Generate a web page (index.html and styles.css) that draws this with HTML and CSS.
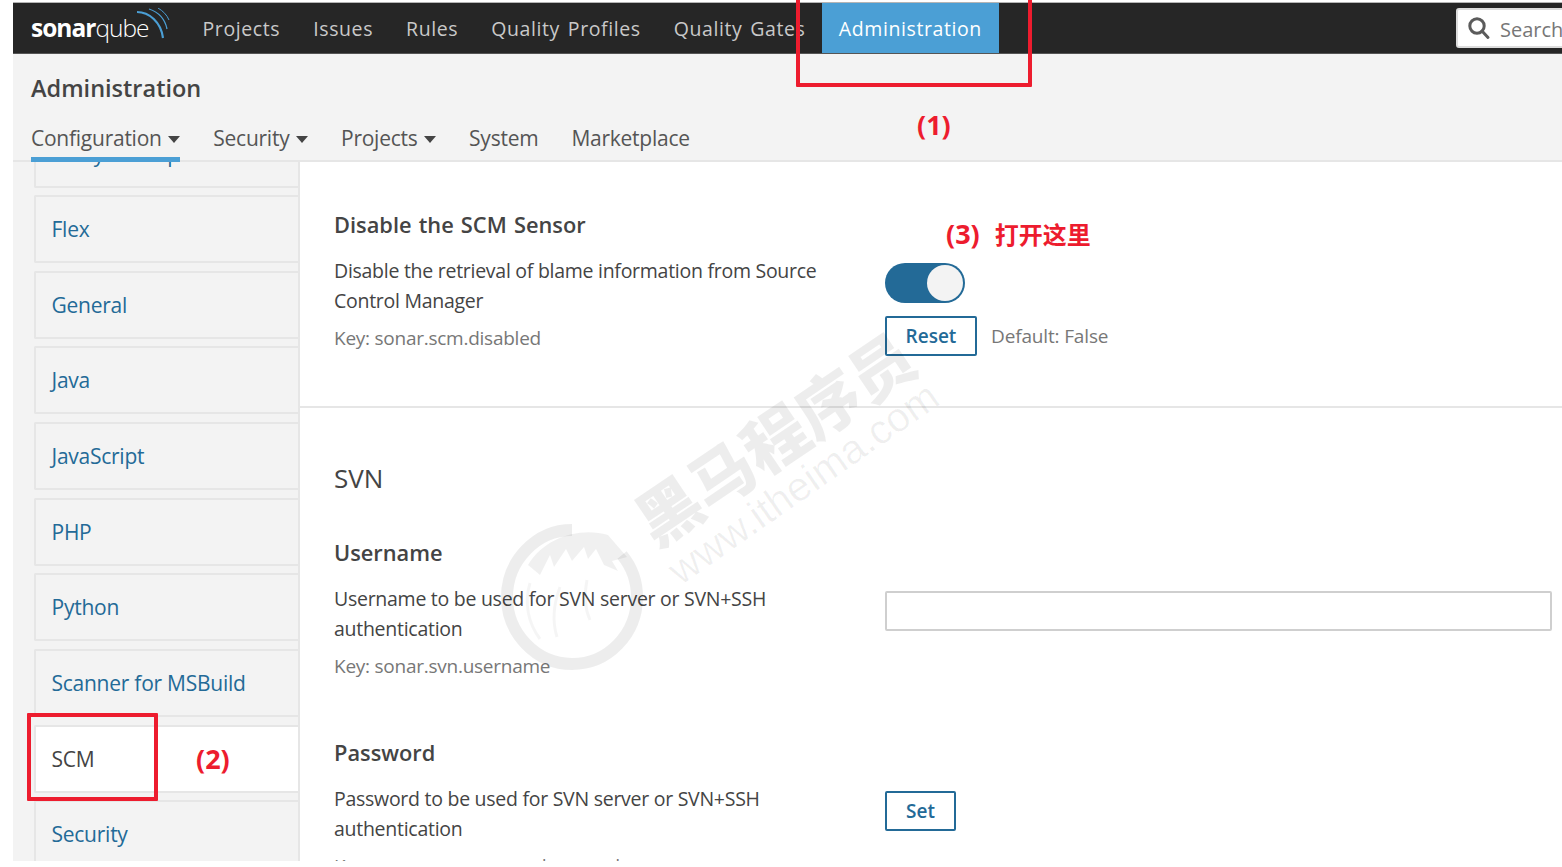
FILE: index.html
```html
<!DOCTYPE html>
<html lang="en">
<head>
<meta charset="utf-8">
<title>Administration - SonarQube</title>
<link rel="stylesheet" href="styles.css">
</head>
<body>
<div class="app">
  <header class="topbar">
    <a class="logo"><span class="logo-b">sonar</span><span class="logo-l">qube</span>
      <svg class="logo-arcs" width="34" height="34" viewBox="0 0 34 34" fill="none" stroke="#4b9fd5"><path d="M1 4C13 4 25 14 27 30" stroke-width="2.2"/><path d="M13 1C22 4 29 11 31 21" stroke-width="1.3"/><path d="M22 0C27 3 31 7 33 12" stroke-width="1"/></svg>
    </a>
    <nav class="mainnav">
      <a class="navitem">Projects</a>
      <a class="navitem">Issues</a>
      <a class="navitem">Rules</a>
      <a class="navitem">Quality Profiles</a>
      <a class="navitem">Quality Gates</a>
      <a class="navitem active">Administration</a>
    </nav>
    <div class="search">
      <svg width="24" height="24" viewBox="0 0 24 24" fill="none" stroke="#5b5b5b" stroke-width="3"><circle cx="10" cy="10" r="7.2"/><path d="M15 15l6 6.5" stroke-linecap="round"/></svg>
      <span>Search</span>
    </div>
  </header>
  <section class="pagehead">
    <h1>Administration</h1>
    <div class="tabs">
      <a class="tab current">Configuration<i class="caret"></i></a>
      <a class="tab">Security<i class="caret"></i></a>
      <a class="tab">Projects<i class="caret"></i></a>
      <a class="tab">System</a>
      <a class="tab">Marketplace</a>
    </div>
  </section>
  <div class="body">
    <aside class="side">
      <a class="cat first">Analysis Scope</a>
      <a class="cat">Flex</a>
      <a class="cat">General</a>
      <a class="cat">Java</a>
      <a class="cat">JavaScript</a>
      <a class="cat">PHP</a>
      <a class="cat">Python</a>
      <a class="cat">Scanner for MSBuild</a>
      <a class="cat on">SCM</a>
      <a class="cat">Security</a>
    </aside>
    <main class="content">
      <section class="block top">
        <div class="setting">
          <div class="info">
            <h3>Disable the SCM Sensor</h3>
            <p>Disable the retrieval of blame information from Source Control Manager</p>
            <p class="key">Key: sonar.scm.disabled</p>
          </div>
          <div class="ctl">
            <div class="toggle"><i></i></div>
            <div class="row"><button class="btn reset">Reset</button><span class="dflt">Default: False</span></div>
          </div>
        </div>
      </section>
      <section class="block">
        <h2>SVN</h2>
        <div class="setting user">
          <div class="info">
            <h3>Username</h3>
            <p>Username to be used for SVN server or SVN+SSH authentication</p>
            <p class="key">Key: sonar.svn.username</p>
          </div>
          <div class="ctl"><div class="input"></div></div>
        </div>
        <div class="setting pass">
          <div class="info">
            <h3>Password</h3>
            <p>Password to be used for SVN server or SVN+SSH authentication</p>
            <p class="key">Key: sonar.svn.password.secured</p>
          </div>
          <div class="ctl"><button class="btn set">Set</button></div>
        </div>
      </section>
    </main>
  </div>
</div>

<div class="watermark">
  <svg class="wm-logo" width="144" height="148" viewBox="0 0 144 148" fill="none">
    <path d="M72 7C36 7 7 38 7 74s29 67 65 67 65-30 65-67c0-17-6-31-15-42" stroke="#000" stroke-opacity=".07" stroke-width="12"/>
    <path d="M28 42C45 14 80 4 108 12L127 34 112 38 118 48 104 42 96 26 88 36 84 24 72 38 66 26 54 44 50 32 40 52Z" fill="#000" fill-opacity=".06"/>
    <path d="M60 64C54 80 52 98 57 114M87 57C84 72 85 86 90 97M30 60C24 80 28 100 40 116" stroke="#000" stroke-opacity=".04" stroke-width="3"/>
  </svg>
  <div class="wm-cn">黑马程序员</div>
  <div class="wm-en">www.itheima.com</div>
</div>

<div class="mark m1"></div>
<div class="mark m2"></div>
<div class="note n1">(1)</div>
<div class="note n2">(2)</div>
<div class="note n3">(3)<span class="cjk">打开这里</span></div>
</body>
</html>
```
FILE: styles.css
```css
* { box-sizing: border-box; }
html, body { margin: 0; padding: 0; background: #fff; }
body {
  width: 1562px; height: 867px; overflow: hidden; position: relative;
  font-family: "Open Sans", "Noto Sans", "Noto Sans CJK SC", sans-serif;
  color: #444;
}
.app {
  margin: 2px 0 0 13px; width: 1549px; height: 859px; overflow: hidden;
  background: #f3f3f3; display: flex; flex-direction: column;
  border-top: 1px solid #b5b5b5;
}
.topbar {
  height: 51px; flex: none; background: #262626; display: flex; align-items: center;
  border-bottom: 1px solid #555; padding-left: 18px;
}
.logo {
  width: 155px; flex: none; color: #fff; font-size: 24.5px; letter-spacing: -1px;
  position: relative; line-height: 50px; height: 50px;
}
.logo-b { font-weight: 700; }
.logo-l { font-weight: 300; }
.logo-arcs { position: absolute; left: 105px; top: 5px; }
.mainnav { display: flex; height: 50px; margin-left: 0; }
.navitem {
  padding: 0 16.5px; line-height: 52px; font-size: 19.5px; color: #c9c9c9;
  letter-spacing: .6px; word-spacing: 2.2px; white-space: nowrap;
}
.navitem.active { background: #4b9fd5; color: #fff; padding: 0 16.8px; }
.search {
  margin-left: auto; margin-right: -24px; width: 130px; height: 40px; background: #fff;
  border: 2px solid #ddd; border-radius: 3px; display: flex; align-items: center;
  gap: 9px; padding-left: 9px; font-size: 20px; color: #777; flex: none; white-space: nowrap;
}
.search span { position: relative; top: 1px; }
.pagehead {
  height: 108px; flex: none; padding: 17px 0 0 18px; border-bottom: 2px solid #e6e6e6;
  position: relative; z-index: 1; background: #f3f3f3;
}
.pagehead h1 {
  margin: 0; font-size: 23.5px; line-height: 34px; font-weight: 600; color: #444;
}
.tabs { display: flex; gap: 33px; margin-top: 18px; }
.tab {
  font-size: 21px; line-height: 30px; color: #555; height: 39px; white-space: nowrap; letter-spacing: -.25px;
  display: block;
}
.tab.current { border-bottom: 5px solid #4b9fd5; margin-bottom: -2px; height: 39px; }
.caret {
  display: inline-block; margin-left: 6.6px; vertical-align: 3px;
  border: 6.5px solid transparent; border-top: 7px solid #444; border-bottom: 0;
}
.body { flex: 1; display: flex; min-height: 0; }
.side {
  width: 287px; flex: none; padding-left: 20.5px; display: flex; flex-direction: column; gap: 7.65px;
  overflow: hidden; border-right: 2px solid #e6e6e6;
}
.cat {
  flex: none; height: 68px; line-height: 64px; padding-left: 16px;
  border: 2px solid #e6e6e6; border-right: 0; border-radius: 2px 0 0 2px;
  color: #236a97; font-size: 21px; letter-spacing: -.25px; white-space: nowrap;
}
.cat.first { margin-top: -42.5px; }
.cat.on { background: #fff; color: #444; margin-right: -2px; }
.content { flex: 1; background: #fff; min-width: 0; overflow: hidden; }
.block { padding-left: 34px; }
.block.top { height: 246px; border-bottom: 2px solid #e6e6e6; padding-top: 47px; }
.setting { display: flex; }
.info { width: 551px; flex: none; padding-right: 60px; }
h3 { margin: 0; font-size: 21.8px; line-height: 32px; font-weight: 600; color: #444; word-spacing: 1.5px; }
p { margin: 0; font-size: 19.5px; line-height: 30px; color: #444; letter-spacing: -.27px; }
.info h3 + p { margin-top: 15px; }
p.key { font-size: 19px; letter-spacing: -.25px; color: #777; margin-top: 7px; }
.ctl { flex: 1; min-width: 0; }
.block.top .ctl { padding-top: 54px; }
.toggle {
  width: 80px; height: 40px; border-radius: 20px; background: #236a97; position: relative;
  display: flex; justify-content: flex-end; align-items: center; padding-right: 2px;
}
.toggle i { display: block; width: 36px; height: 36px; border-radius: 50%; background: #f3f3f3; }
.row { display: flex; align-items: center; margin-top: 13px; gap: 14px; }
.btn {
  font: 600 19px/1 "Open Sans", sans-serif; color: #236a97; background: #fff;
  border: 2px solid #236a97; border-radius: 2px; height: 40px; padding: 0;
}
.reset { width: 92px; }
.set { width: 71px; }
.dflt { font-size: 19px; color: #777; letter-spacing: -.15px; }
h2 { margin: 0; font-size: 26px; line-height: 36px; font-weight: 400; color: #444; padding-top: 52px; }
.setting.user { margin-top: 41px; }
.setting.user .ctl { padding-top: 54px; }
.input { width: 667px; height: 40px; border: 2px solid #cfcfcf; border-radius: 2px; background: #fff; }
.setting.pass { margin-top: 56px; }
.setting.pass .ctl { padding-top: 54px; }

.watermark { position: absolute; inset: 0; pointer-events: none; overflow: hidden; z-index: 2; }
.wm-logo { position: absolute; left: 500px; top: 523px; }
.wm-cn {
  position: absolute; left: 613px; top: 404px; font: 900 64px/1 "Noto Sans CJK SC", sans-serif;
  color: rgba(0,0,0,.07); transform: rotate(-34deg); white-space: nowrap;
}
.wm-en {
  position: absolute; left: 644px; top: 463px; font: 400 41px/1 "Liberation Sans", sans-serif;
  color: rgba(0,0,0,.06); transform: rotate(-35deg); white-space: nowrap;
}
.mark { position: absolute; border: 4px solid #ed1c2e; border-radius: 1px; z-index: 3; }
.m1 { left: 796px; top: -6px; width: 236px; height: 93px; }
.m2 { left: 27px; top: 713px; width: 131px; height: 88px; }
.note {
  position: absolute; color: #ed1c2e; font: 700 27px/1 "Open Sans", "Noto Sans CJK SC", sans-serif; white-space: nowrap; z-index: 3;
}
.n1 { left: 917px; top: 111px; }
.n2 { left: 196px; top: 745px; }
.n3 { left: 946px; top: 220px; }
.cjk { font-size: 24px; margin-left: 15px; }
```
